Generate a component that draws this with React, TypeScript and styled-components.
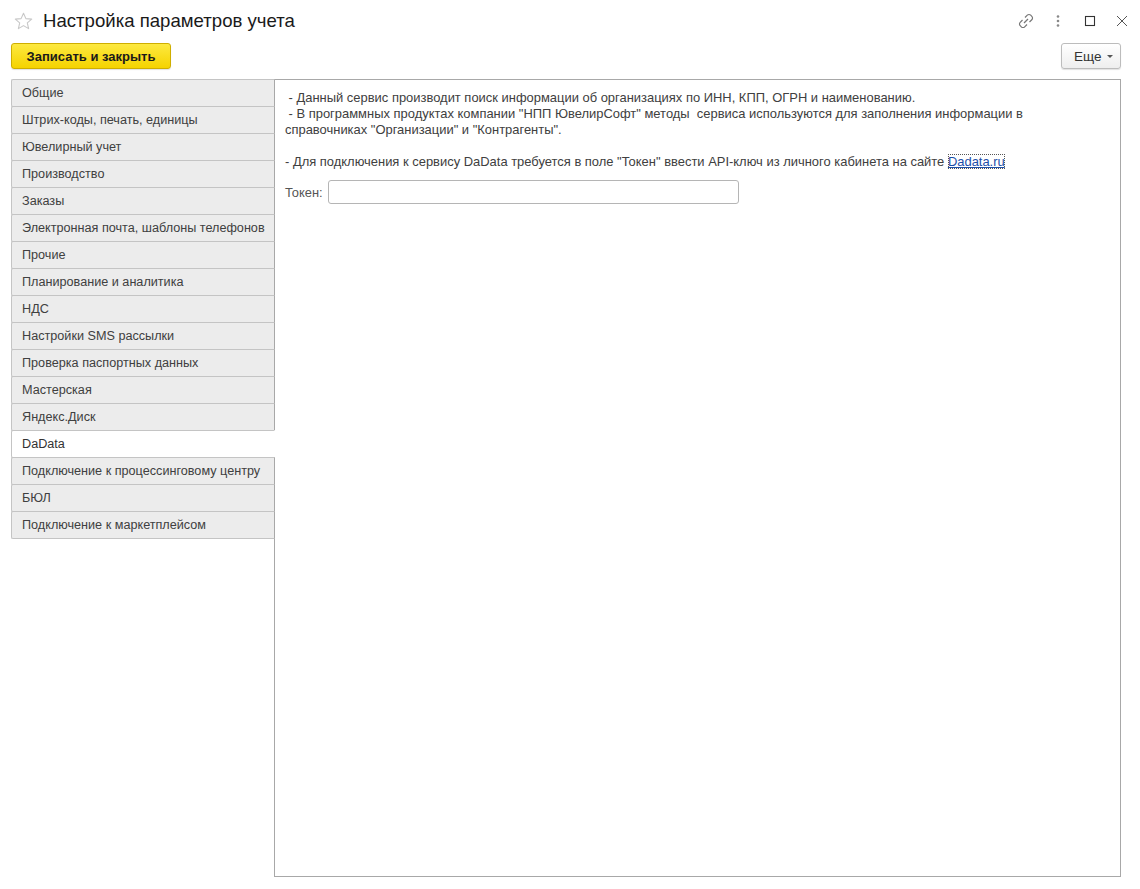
import React from 'react'
import styled, { createGlobalStyle } from 'styled-components'

const GlobalStyle = createGlobalStyle`
  html, body {
    margin: 0;
    padding: 0;
    background: #fff;
    font-family: "Liberation Sans", Arial, sans-serif;
    color: #404040;
  }
`

const Page = styled.div`
  width: 1140px;
  height: 889px;
  box-sizing: border-box;
  padding: 0 19px 0 11px;
  display: flex;
  flex-direction: column;
`

const Header = styled.div`
  height: 43px;
  display: flex;
  align-items: center;
  padding: 0 0 1px 3px;
  box-sizing: border-box;
`

const Title = styled.h1`
  margin: 0 0 0 10px;
  font-size: 18.6px;
  font-weight: normal;
  color: #1a1a1a;
  flex: 1;
`

const HeaderIcons = styled.div`
  display: flex;
  align-items: center;
  margin-right: -17px;
`

const IconSlot = styled.span`
  width: 32px;
  height: 24px;
  display: flex;
  align-items: center;
  justify-content: center;
  color: #555;
`

const Toolbar = styled.div`
  display: flex;
  justify-content: space-between;
  align-items: center;
  height: 26px;
`

const Button = styled.button<{ $primary?: boolean }>`
  height: 26px;
  box-sizing: border-box;
  padding: 0 12px;
  border-radius: 3px;
  font-family: inherit;
  font-size: 13px;
  cursor: pointer;
  display: flex;
  align-items: center;
  gap: 6px;
  color: ${p => (p.$primary ? '#1a1a1a' : '#333')};
  font-weight: ${p => (p.$primary ? 'bold' : 'normal')};
  border: 1px solid ${p => (p.$primary ? '#cfae00' : '#bcbcbc')};
  background: ${p =>
    p.$primary
      ? 'linear-gradient(#fde940, #f5d300)'
      : 'linear-gradient(#ffffff, #eeeeee)'};
  box-shadow: 0 1px 1px rgba(0, 0, 0, 0.12);
`

const PrimaryButton = styled(Button)`
  width: 160px;
  justify-content: center;
`

const MoreButton = styled(Button)`
  width: 60px;
  padding: 0 0 0 12px;
  font-size: 13.5px;
`

const Caret = styled.span`
  width: 0;
  height: 0;
  border-left: 3px solid transparent;
  border-right: 3px solid transparent;
  border-top: 3px solid #555;
  margin-top: 1px;
`

const Main = styled.div`
  display: flex;
  margin-top: 10px;
  height: 798px;
`

const Tabs = styled.div`
  width: 264px;
  margin-right: -1px;
  display: flex;
  flex-direction: column;
  position: relative;
  z-index: 1;
`

const Tab = styled.div<{ $active?: boolean }>`
  height: 28px;
  margin-bottom: -1px;
  box-sizing: border-box;
  padding: 0 0 1px 10px;
  display: flex;
  align-items: center;
  font-size: 12.65px;
  color: ${p => (p.$active ? '#333' : '#404040')};
  background: ${p => (p.$active ? '#fff' : '#ececec')};
  border: 1px solid #c4c4c4;
  border-right-color: ${p => (p.$active ? '#fff' : '#a8a8a8')};
  border-radius: 2px 0 0 2px;
  white-space: nowrap;
`

const Panel = styled.div`
  flex: 1;
  border: 1px solid #a8a8a8;
  padding: 10px 10px;
  box-sizing: border-box;
`

const Info = styled.div`
  font-size: 12.95px;
  line-height: 16px;
  white-space: pre;
  color: #404040;
`

const Link = styled.a`
  color: #1c4ea8;
  text-decoration: underline;
  outline: 1px dotted #555;
  outline-offset: -1px;
`

const FieldRow = styled.div`
  display: flex;
  align-items: center;
  margin-top: 10px;
  gap: 5px;
  font-size: 12.9px;
`

const Label = styled.span`
  color: #555;
`

const Input = styled.input`
  width: 411px;
  height: 24px;
  box-sizing: border-box;
  border: 1px solid #b5b5b5;
  border-radius: 3px;
  font-family: inherit;
  font-size: 13px;
  padding: 0 6px;
`

const tabs = [
  'Общие',
  'Штрих-коды, печать, единицы',
  'Ювелирный учет',
  'Производство',
  'Заказы',
  'Электронная почта, шаблоны телефонов',
  'Прочие',
  'Планирование и аналитика',
  'НДС',
  'Настройки SMS рассылки',
  'Проверка паспортных данных',
  'Мастерская',
  'Яндекс.Диск',
  'DaData',
  'Подключение к процессинговому центру',
  'БЮЛ',
  'Подключение к маркетплейсом',
]

const StarIcon = () => (
  <svg width="19" height="18" viewBox="0 0 19 18">
    <path
      d="M9.5 1.2 L11.9 6.6 L17.7 7.1 L13.3 10.9 L14.6 16.6 L9.5 13.6 L4.4 16.6 L5.7 10.9 L1.3 7.1 L7.1 6.6 Z"
      fill="none"
      stroke="#c8c8c8"
      strokeWidth="1.1"
      strokeLinejoin="round"
    />
  </svg>
)

const LinkIcon = () => (
  <svg width="16" height="16" viewBox="0 0 16 16" fill="none" stroke="#777" strokeWidth="1.2">
    <path d="M7 4.5 L9.3 2.2 a2.4 2.4 0 0 1 3.4 0 L13.8 3.3 a2.4 2.4 0 0 1 0 3.4 L11.5 9" />
    <path d="M9 11.5 L6.7 13.8 a2.4 2.4 0 0 1 -3.4 0 L2.2 12.7 a2.4 2.4 0 0 1 0 -3.4 L4.5 7" />
    <path d="M6 10 L10 6" />
  </svg>
)

const DotsIcon = () => (
  <svg width="4" height="14" viewBox="0 0 4 14" fill="#888">
    <circle cx="2" cy="2.5" r="1.3" />
    <circle cx="2" cy="7" r="1.3" />
    <circle cx="2" cy="11.5" r="1.3" />
  </svg>
)

const MaxIcon = () => (
  <svg width="12" height="12" viewBox="0 0 12 12">
    <rect x="1.5" y="1.5" width="9" height="9" fill="none" stroke="#333" strokeWidth="1.1" />
  </svg>
)

const CloseIcon = () => (
  <svg width="12" height="12" viewBox="0 0 12 12" stroke="#555" strokeWidth="1">
    <path d="M1 1 L11 11 M11 1 L1 11" />
  </svg>
)

export default function App() {
  return (
    <>
      <GlobalStyle />
      <Page>
        <Header>
          <StarIcon />
          <Title>Настройка параметров учета</Title>
          <HeaderIcons>
            <IconSlot><LinkIcon /></IconSlot>
            <IconSlot><DotsIcon /></IconSlot>
            <IconSlot><MaxIcon /></IconSlot>
            <IconSlot><CloseIcon /></IconSlot>
          </HeaderIcons>
        </Header>

        <Toolbar>
          <PrimaryButton $primary>Записать и закрыть</PrimaryButton>
          <MoreButton>
            Еще <Caret />
          </MoreButton>
        </Toolbar>

        <Main>
          <Tabs>
            {tabs.map(t => (
              <Tab key={t} $active={t === 'DaData'}>
                {t}
              </Tab>
            ))}
          </Tabs>

          <Panel>
            <Info>
              {' - Данный сервис производит поиск информации об организациях по ИНН, КПП, ОГРН и наименованию.\n'}
              {' - В программных продуктах компании "НПП ЮвелирСофт" методы  сервиса используются для заполнения информации в\n'}
              {'справочниках "Организации" и "Контрагенты".\n'}
              {'\n'}
              {'- Для подключения к сервису DaData требуется в поле "Токен" ввести API-ключ из личного кабинета на сайте '}
              <Link href="#">Dadata.ru</Link>
            </Info>
            <FieldRow>
              <Label>Токен:</Label>
              <Input />
            </FieldRow>
          </Panel>
        </Main>
      </Page>
    </>
  )
}
